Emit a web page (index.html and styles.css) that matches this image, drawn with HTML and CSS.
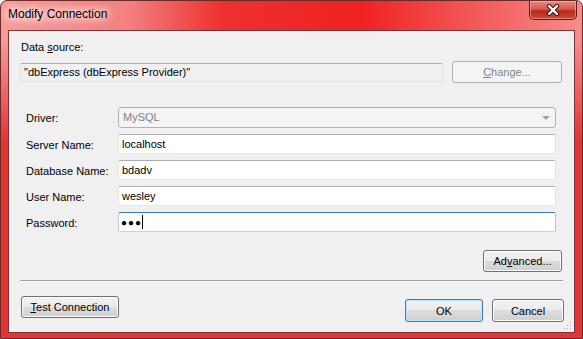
FILE: index.html
```html
<!DOCTYPE html>
<html>

<head>
    <meta charset='utf-8' name='viewport' content='width=device-width, initial-scale=1' />
    <link rel="stylesheet" href="styles.css">
</head>

<body>
    <div class='window'>
        <div class='titlebar'>
            <span class='title'>Modify Connection</span>
            <button class='close'>
                <svg width='14' height='12' viewBox='0 0 14 12'>
                    <path d='M3 2 L11 10 M11 2 L3 10' stroke='#3a1010' stroke-width='4.4' stroke-linecap='round' />
                    <path d='M3 2 L11 10 M11 2 L3 10' stroke='#ffffff' stroke-width='2.4' stroke-linecap='round' />
                </svg>
            </button>
        </div>
        <div class='client'>
            <div class='source'>
                <div class='caption'>Data <u>s</u>ource:</div>
                <div class='source-row'>
                    <input class='edit ro' value='"dbExpress (dbExpress Provider)"' readonly>
                    <button class='btn disabled change'><u>C</u>hange...</button>
                </div>
            </div>
            <div class='fields'>
                <label>Driver:</label>
                <div class='combo'>MySQL<span class='arrow'></span></div>
                <label>Server Name:</label>
                <input class='edit' value='localhost'>
                <label>Database Name:</label>
                <input class='edit' value='bdadv'>
                <label>User Name:</label>
                <input class='edit' value='wesley'>
                <label>Password:</label>
                <div class='edit focus'><span class='dots'>●●●</span><span class='caret'></span></div>
            </div>
            <div class='adv-row'><button class='btn adv'>Ad<u>v</u>anced...</button></div>
            <div class='sep'></div>
            <div class='bottom'>
                <button class='btn test'><u>T</u>est Connection</button>
                <div class='spacer'></div>
                <button class='btn default ok'>OK</button>
                <button class='btn cancel'>Cancel</button>
            </div>
            <svg class='grip' width='8' height='8' viewBox='0 0 8 8'>
                <rect x='6' y='0' width='1' height='1' fill='#b0b0b0' />
                <rect x='3' y='3' width='1' height='1' fill='#b0b0b0' />
                <rect x='6' y='3' width='1' height='1' fill='#b0b0b0' />
                <rect x='0' y='6' width='1' height='1' fill='#b0b0b0' />
                <rect x='3' y='6' width='1' height='1' fill='#b0b0b0' />
                <rect x='6' y='6' width='1' height='1' fill='#b0b0b0' />
            </svg>
        </div>
    </div>
</body>

</html>
```
FILE: styles.css
```css
body {
    margin: 0;
    font: 11px "Liberation Sans", Arial, sans-serif;
    color: #000;
}

.window {
    width: 583px;
    height: 339px;
    box-sizing: border-box;
    border: 1px solid #6a2a2a;
    border-radius: 7px 7px 0 0;
    background:
        linear-gradient(to bottom, rgba(228, 40, 40, 0) 0px, rgba(228, 40, 40, 0) 40px, #e43434 140px),
        linear-gradient(90deg, #f59c9c 0%, #f38080 22%, #ee3030 38%, #ef2222 62%, #f35a5a 82%, #f78c8c 100%);
    display: flex;
    flex-direction: column;
}

.titlebar {
    height: 29px;
    display: flex;
    align-items: flex-start;
    flex-shrink: 0;
}

.title {
    padding: 6px 0 0 7px;
    line-height: 15px;
    font-size: 12px;
    text-shadow: 0 0 8px #fff, 0 0 8px #fff, 0 0 12px #fff;
}

.close {
    margin-left: auto;
    margin-right: 5px;
    width: 48px;
    height: 19px;
    padding: 0;
    border: 1px solid #5e1c1c;
    border-top: none;
    border-radius: 0 0 5px 5px;
    background: linear-gradient(#e88a80 0%, #d85a4e 45%, #b82a1a 55%, #c84a38 100%);
    box-shadow: inset 0 0 0 1px rgba(255, 200, 200, 0.5);
    display: flex;
    align-items: center;
    justify-content: center;
}

.client {
    position: relative;
    margin: 0 7px;
    height: 303px;
    box-sizing: border-box;
    border: 1px solid #7a3434;
    background: #f0f0f0;
}

.source {
    padding: 9px 12px 0 11px;
}

.caption {
    line-height: 15px;
    padding-left: 1px;
}

.source-row {
    margin-top: 6px;
    display: flex;
    align-items: center;
    height: 22px;
}

.edit {
    box-sizing: border-box;
    height: 20px;
    border: 1px solid;
    border-color: #abadb3 #dbdfe6 #e3e9ef #e2e3ea;
    border-radius: 2px;
    background: #fff;
    padding: 0 3px;
    font: inherit;
    color: #000;
    outline: none;
    margin: 0;
}

.ro {
    width: 423px;
    height: 19px;
    background: #f0f0f0;
}

.btn {
    box-sizing: border-box;
    border: 1px solid #707070;
    border-radius: 3px;
    background: linear-gradient(#f2f2f2 0%, #ebebeb 50%, #dddddd 50%, #cfcfcf 100%);
    box-shadow: inset 0 0 0 1px #fcfcfc;
    font: inherit;
    color: #000;
    padding: 0;
    height: 22px;
    margin: 0;
}

.disabled {
    border-color: #adb2b5;
    background: #f4f4f4;
    box-shadow: none;
    color: #838383;
}

.change {
    width: 110px;
    margin-left: 9px;
}

.fields {
    margin-top: 24px;
    padding-left: 17px;
    display: grid;
    grid-template-columns: 92px 438px;
    row-gap: 6px;
    align-items: center;
}

.fields label {
    padding-top: 1px;
}

.combo {
    position: relative;
    box-sizing: border-box;
    height: 21px;
    line-height: 19px;
    border: 1px solid #adb2b5;
    border-radius: 3px;
    background: #f4f4f4;
    color: #838383;
    padding-left: 4px;
}

.arrow {
    position: absolute;
    right: 5px;
    top: 8px;
    border-left: 4px solid transparent;
    border-right: 4px solid transparent;
    border-top: 4px solid #a0a0a0;
}

.focus {
    border-color: #3d7bad #a4c9e3 #b7d9ed #b5cfe7;
    display: flex;
    align-items: center;
    padding-left: 2px;
}

.dots {
    font-size: 10px;
    letter-spacing: 1px;
}

.caret {
    width: 1px;
    height: 14px;
    background: #000;
}

.adv-row {
    margin-top: 18px;
    padding-right: 12px;
    display: flex;
    justify-content: flex-end;
}

.adv {
    width: 79px;
}

.sep {
    margin: 8px 11px 0;
    height: 1px;
    background: #a0a0a0;
    border-bottom: 1px solid #fff;
}

.bottom {
    display: flex;
    align-items: flex-start;
    padding: 0 10px 0 12px;
}

.test {
    width: 98px;
    margin-top: 14px;
}

.spacer {
    flex: 1;
}

.ok,
.cancel {
    height: 23px;
    margin-top: 17px;
}

.ok {
    width: 78px;
}

.default {
    border-color: #3c7fb1;
    box-shadow: inset 0 0 0 1px #b8e6fb;
}

.cancel {
    width: 72px;
    margin-left: 9px;
}

.grip {
    position: absolute;
    right: 2px;
    bottom: 2px;
}
```
